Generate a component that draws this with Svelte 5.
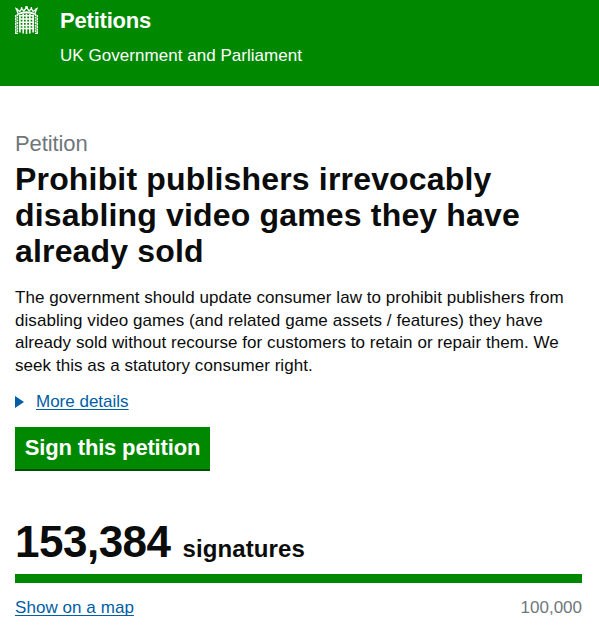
<script lang="ts">
	const signatures = 153384;
	const target = 100000;
	const progress = Math.min(100, (signatures / target) * 100);

	const format = (n: number) => n.toLocaleString('en-GB');
</script>

<header class="banner">
	<svg class="portcullis" viewBox="0 0 23 28" width="23" height="28" fill="none" stroke="#fff" aria-hidden="true">
		<!-- crown -->
		<path d="M3.4 8.4L1.4 3L4.8 5.6L6.6 2.6L8.8 5L11.5 1.6L14.2 5L16.4 2.6L18.2 5.6L21.6 3L19.6 8.4" stroke-width="1.3" />
		<path d="M3.4 8Q11.5 4.4 19.6 8" stroke-width="1.9" />
		<path d="M11.5 0V3M10 1.2H13M6.6 1V3M16.4 1V3M.6 2.8H2.4M20.6 2.8H22.4" stroke-width="1.3" />
		<!-- gate -->
		<path d="M4.9 9V26.5M8.2 8V27.5M11.5 7.6V28M14.8 8V27.5M18.1 9V26.5" stroke-width="1.6" />
		<path d="M4.2 9.8H18.8M4.2 13H18.8M4.2 16.2H18.8M4.2 19.4H18.8M4.2 22.6H18.8" stroke-width="1.5" />
		<!-- chains -->
		<path d="M.7 9V28M22.3 9V28" stroke-width="1.4" stroke-dasharray="2.2 .5" />
		<path d="M2.4 8V27M20.6 8V27" stroke-width="1.5" stroke-dasharray="1.9 .8" />
		<path d="M0 27.3H3M20 27.3H23" stroke-width="1.3" />
	</svg>
	<div class="brand">
		<span class="brand-title">Petitions</span>
		<span class="brand-tagline">UK Government and Parliament</span>
	</div>
</header>

<main>
	<h1>
		<span class="context">Petition</span>
		<span class="action">Prohibit publishers irrevocably<br />disabling video games they have<br />already sold</span>
	</h1>

	<p class="background">
		The government should update consumer law to prohibit publishers from<br />
		disabling video games (and related game assets / features) they have<br />
		already sold without recourse for customers to retain or repair them. We<br />
		seek this as a statutory consumer right.
	</p>

	<div class="details">
		<svg width="9" height="12" viewBox="0 0 9 12" aria-hidden="true"><path d="M0 0L9 6L0 12Z" fill="currentColor" /></svg>
		<a class="link more" href="#details">More details</a>
	</div>

	<button class="sign">Sign this petition</button>

	<section class="count">
		<p class="total"><span class="number">{format(signatures)}</span><span class="label">signatures</span></p>
		<div class="graph"><div class="bar" style="width: {progress}%"></div></div>
		<div class="count-foot">
			<a class="link map" href="#map">Show on a map</a>
			<span class="target">{format(target)}</span>
		</div>
	</section>
</main>

<style>
	:global(body) {
		background: #fff;
		color: #0b0c0c;
		font-family: "Liberation Sans", Arial, sans-serif;
		font-size: 17px;
		overflow: hidden;
	}

	.banner {
		display: flex;
		box-sizing: border-box;
		height: 86px;
		padding: 6px 15px 0;
		background: #008800;
		color: #fff;
	}

	.portcullis {
		flex: none;
		margin-right: 22px;
	}

	.brand {
		display: flex;
		flex-direction: column;
	}

	.brand-title {
		font-size: 22px;
		font-weight: 700;
		line-height: 30px;
		letter-spacing: -0.2px;
	}

	.brand-tagline {
		margin-top: 10px;
		line-height: 20px;
		letter-spacing: 0.04px;
	}

	main {
		padding: 45px 17px 0 15px;
	}

	h1 {
		margin: 0;
	}

	.context {
		display: block;
		font-size: 22px;
		font-weight: 400;
		line-height: 26px;
		letter-spacing: -0.1px;
		color: #6f777b;
	}

	.action {
		display: block;
		margin-top: 4px;
		font-size: 32px;
		line-height: 36px;
		letter-spacing: 0.17px;
		white-space: nowrap;
	}

	.background {
		margin: 18px 0 0;
		line-height: 22.7px;
		letter-spacing: 0.05px;
		white-space: nowrap;
	}

	.details {
		display: flex;
		align-items: center;
		gap: 12px;
		height: 20px;
		margin-top: 14px;
		color: #005ea5;
	}

	.link {
		color: #005ea5;
		text-underline-offset: 2px;
		text-decoration-thickness: 1px;
		text-decoration-skip-ink: none;
	}

	.sign {
		display: block;
		width: 195px;
		height: 44px;
		margin: 15px 0 0;
		padding: 0;
		border: 0;
		border-bottom: 2px solid #004e00;
		background: #008800;
		color: #fff;
		font: 700 22px/42px "Liberation Sans", Arial, sans-serif;
		letter-spacing: -0.17px;
	}

	.total {
		display: flex;
		align-items: baseline;
		gap: 12px;
		height: 50px;
		margin: 46px 0 0;
		font-weight: 700;
		line-height: 50px;
	}

	.number {
		font-size: 44px;
		letter-spacing: -0.5px;
	}

	.label {
		font-size: 24px;
		letter-spacing: 0.1px;
	}

	.graph {
		height: 9px;
		margin-top: 7px;
	}

	.bar {
		height: 100%;
		background: #008800;
	}

	.count-foot {
		display: flex;
		justify-content: space-between;
		margin-top: 15px;
		line-height: 20px;
	}

	.map {
		letter-spacing: 0.06px;
	}

	.target {
		color: #6f777b;
	}
</style>
